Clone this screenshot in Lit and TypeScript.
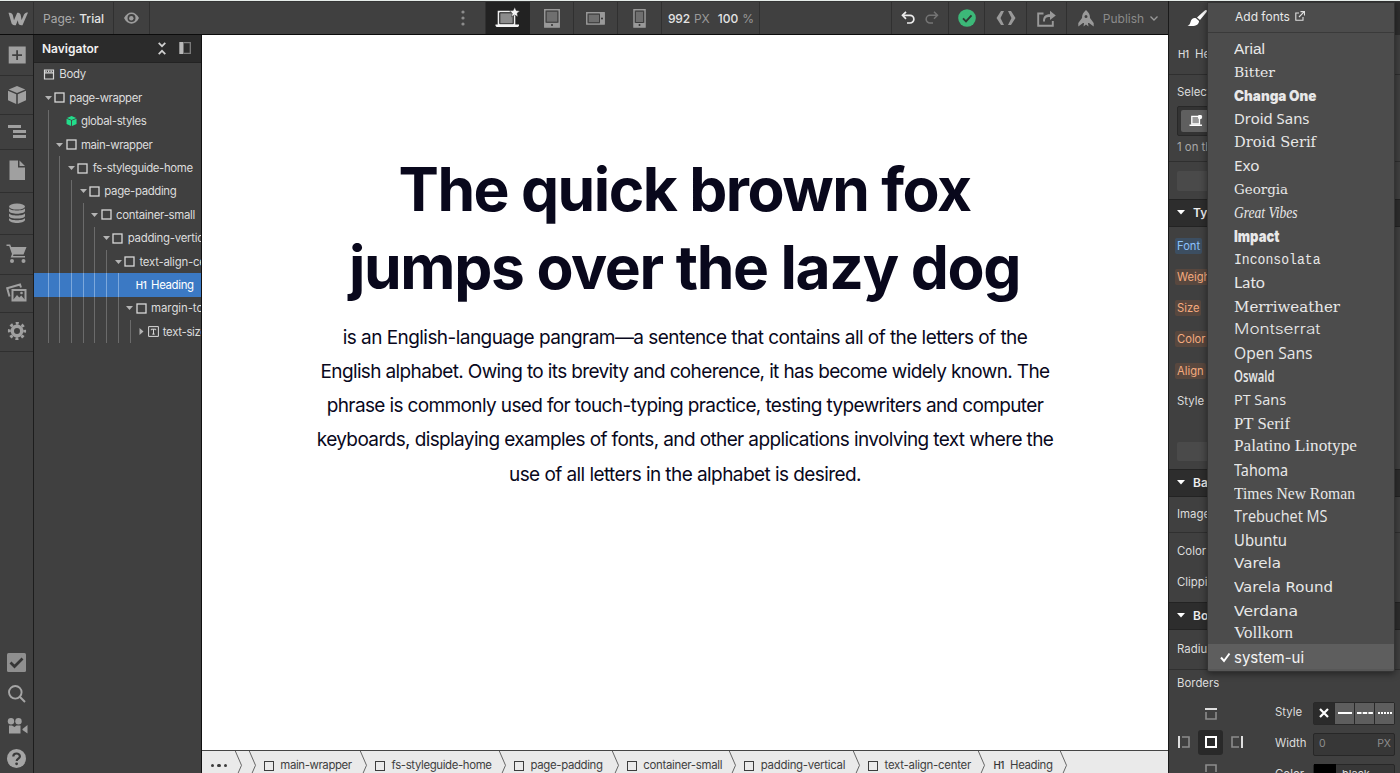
import { LitElement, html, css, svg, nothing } from "lit";
import { customElement, property } from "lit/decorators.js";
import { styleMap } from "lit/directives/style-map.js";

/** A single line of text that is set to an exact width, by tracking or by condensing. */
@customElement("fit-line")
class FitLine extends LitElement {
  @property() text = "";
  @property({ type: Number }) width = 0;
  @property() mode = "track";
  static styles = css`
    :host { display: inline-block; white-space: pre; }
    .run { display: inline-block; transform-origin: 0 50%; white-space: pre; }
  `;
  render() {
    return html`<span class="run">${this.text}</span>`;
  }
  updated() {
    const run = this.renderRoot.querySelector(".run") as HTMLElement;
    run.style.letterSpacing = "0";
    run.style.transform = "none";
    const natural = run.getBoundingClientRect().width;
    if (!this.width || !natural) return;
    this.style.width = this.width + "px";
    if (this.mode === "track") {
      run.style.letterSpacing = (this.width - natural) / this.text.length + "px";
    } else {
      run.style.transform = `scaleX(${this.width / natural})`;
    }
  }
}

const NODES: { d: number; kind: string; name: string; w: number; arrow?: string; sel?: boolean }[] = [
  { d: -1, kind: "body", name: "Body", w: 26.5 },
  { d: 0, kind: "box", name: "page-wrapper", w: 72.5, arrow: "down" },
  { d: 1, kind: "cube", name: "global-styles", w: 65.5 },
  { d: 1, kind: "box", name: "main-wrapper", w: 71.5, arrow: "down" },
  { d: 2, kind: "box", name: "fs-styleguide-home", w: 100, arrow: "down" },
  { d: 3, kind: "box", name: "page-padding", w: 72, arrow: "down" },
  { d: 4, kind: "box", name: "container-small", w: 79, arrow: "down" },
  { d: 5, kind: "box", name: "padding-vertical", w: 84.5, arrow: "down" },
  { d: 6, kind: "box", name: "text-align-center", w: 86.5, arrow: "down" },
  { d: 7, kind: "h1", name: "Heading", w: 42.5, sel: true },
  { d: 7, kind: "box", name: "margin-top", w: 59, arrow: "down" },
  { d: 8, kind: "text", name: "text-size-medium", w: 90, arrow: "right" },
];

type Font = { n: string; w: number; dy?: number; f: string; s?: number; b?: number; i?: boolean };
const SANS = '"Open Sans", sans-serif';
const NOTO = '"Noto Sans", sans-serif';
const SERIF = '"Liberation Serif", serif';
const DSERIF = '"DejaVu Serif", serif';
const FONTS: Font[] = [
  { n: "Arial", w: 31, f: '"Liberation Sans", sans-serif', s: 15.5, dy: -0.6 },
  { n: "Bitter", w: 41, f: DSERIF, s: 13.8, dy: -0.7 },
  { n: "Changa One", w: 82.5, f: "Inter, sans-serif", b: 900, s: 14.5, dy: -0.4 },
  { n: "Droid Sans", w: 75.5, f: NOTO, dy: -1 },
  { n: "Droid Serif", w: 82, f: DSERIF, s: 14.3, dy: -0.8 },
  { n: "Exo", w: 25.5, f: NOTO, s: 15, dy: -0.6 },
  { n: "Georgia", w: 54, f: DSERIF, s: 13.6, dy: -0.5 },
  { n: "Great Vibes", w: 63.5, f: SERIF, i: true, s: 16, dy: -0.4 },
  { n: "Impact", w: 45.5, f: "Inter, sans-serif", b: 900, s: 16.5, dy: 0.2 },
  { n: "Inconsolata", w: 86.5, f: '"Liberation Mono", monospace', s: 14.5, dy: -0.6 },
  { n: "Lato", w: 31, f: "Lato, sans-serif", s: 15.6 },
  { n: "Merriweather", w: 106, f: DSERIF, s: 14.5 },
  { n: "Montserrat", w: 86.5, f: "Inter, sans-serif", b: 300, s: 14.5, dy: -0.8 },
  { n: "Open Sans", w: 78.5, f: SANS, s: 15.5 },
  { n: "Oswald", w: 40.5, f: SANS, b: 600, s: 16.5, dy: 0.3 },
  { n: "PT Sans", w: 52, f: SANS, s: 15.2, dy: -0.2 },
  { n: "PT Serif", w: 56, f: SERIF, s: 16.5, dy: 0.3 },
  { n: "Palatino Linotype", w: 123, f: SERIF, s: 16.3, dy: -1.4 },
  { n: "Tahoma", w: 54, f: NOTO, s: 15.5, dy: 0.2 },
  { n: "Times New Roman", w: 121, f: SERIF, s: 16, dy: -0.4 },
  { n: "Trebuchet MS", w: 93.5, f: SANS, s: 15.5 },
  { n: "Ubuntu", w: 53, f: NOTO, s: 15.5, dy: 0.4 },
  { n: "Varela", w: 47, f: '"DejaVu Sans", sans-serif', s: 14.4, dy: -0.7 },
  { n: "Varela Round", w: 99, f: '"DejaVu Sans", sans-serif', s: 14.4, dy: -0.6 },
  { n: "Verdana", w: 64, f: '"DejaVu Sans", sans-serif', s: 14.6, dy: 0 },
  { n: "Vollkorn", w: 59, f: SERIF, s: 16.2, dy: -1.5 },
];

const CRUMBS = [
  { n: "main-wrapper", w: 111.3, t: 71.5 },
  { n: "fs-styleguide-home", w: 139, t: 100 },
  { n: "page-padding", w: 112.7, t: 72 },
  { n: "container-small", w: 117.5, t: 79 },
  { n: "padding-vertical", w: 123.8, t: 84.5 },
  { n: "text-align-center", w: 125.5, t: 86.5 },
  { n: "Heading", w: 82, t: 42.5, h1: true },
];

const cube = (fill: string) => svg`
  <path d="M9 0 17.3 3.4 9 7 .7 3.4z" fill=${fill} />
  <path d="M0 4.8 8.2 8.3V18L0 14.2zM18 4.8 9.8 8.3V18l8.2-3.8z" fill=${fill} />`;

const ARROW = {
  down: html`<svg class="arrow" width="7" height="6" viewBox="0 0 7 6"><path d="M0 1h7L3.5 5z" fill="#b4b4b4" /></svg>`,
  right: html`<svg class="arrow" width="7" height="7" viewBox="0 0 7 7"><path d="M1.5 0v7L5.5 3.5z" fill="#b4b4b4" /></svg>`,
};

@customElement("app-root")
class AppRoot extends LitElement {
  static styles = css`
    :host {
      display: flex; flex-direction: column; position: relative; box-sizing: border-box;
      width: 1400px; height: 773px; overflow: hidden; padding-top: 1px;
      background: #e6edea; color: #dcdcdc; font: 11.4px/1.2 Inter, sans-serif;
    }
    * { box-sizing: border-box; }
    svg { display: block; flex: none; }
    .shell { display: grid; grid-template-columns: 1168px 232px; height: 772px; background: #404040; }
    .left { display: grid; grid-template-rows: 34px 738px; min-width: 0; }

    .top { display: flex; background: #404040; border-top: 1px solid #353535; border-bottom: 1px solid #0c0c0c; }
    .cell { display: flex; align-items: center; justify-content: center; border-right: 1px solid #303030; }
    .logo { width: 34px; padding-left: 2px; padding-top: 1px; }
    .page { width: 80px; gap: 4px; font-size: 12px; color: #a9a9a9; padding: 2px 0 0 0; }
    .page b, .zoom b { font-weight: 500; color: #e4e4e4; }
    .eye { width: 36px; }
    .dots { flex: none; width: 336px; justify-content: flex-end; padding-right: 20px; }
    .device { width: 44px; }
    .device.on { background: #222; border-color: #222; width: 44px; }
    .zoom { width: 98px; font-size: 12px; color: #999; gap: 4px; padding: 2px 0 0 1px; }
    .zoom i { font-style: normal; margin-right: 4px; }
    .zoom i:last-child { margin: 0; }
    .space { width: 132px; }
    .undo { width: 57px; gap: 10px; }
    .ok { width: 36px; } .code { width: 42px; } .share { width: 40px; }
    .publish { width: 102px; gap: 9px; color: #8b8b8b; font-size: 12px; border: 0; }
    .publish .lbl { display: flex; gap: 6px; align-items: center; padding-top: 2px; }

    .work { display: grid; grid-template-columns: 34px 168px 966px; height: 738px; }
    .rail { display: flex; flex-direction: column; border-right: 1px solid #1d1d1d; background: #404040; }
    .rail .item { display: flex; align-items: center; justify-content: center; border-bottom: 1px solid #2f2f2f; }
    .rail .item:nth-child(n + 4) { padding-bottom: 2px; }
    .rail .fill { flex: 1; }
    .rail .foot { display: flex; align-items: center; justify-content: center; height: 32px; padding-top: 2px; }

    .nav { border-right: 1.5px solid #111; background: #404040; overflow: hidden; }
    .nav-head { display: flex; align-items: center; height: 27.8px; padding: 0 10.5px 0 8px; background: #2b2b2b; border-bottom: 1px solid #232323; }
    .nav-head b { flex: 1; font-weight: 600; font-size: 12px; color: #f0f0f0; padding-top: 2px; }
    .nav-head svg + svg { margin-left: 13px; }
    .node { display: flex; align-items: center; height: 23.4px; white-space: nowrap; overflow: hidden; }
    .node fit-line, .node .h1 { padding-top: 1.6px; }
    .node.sel { background: #3b79c4; color: #fff; }
    .guide { flex: none; width: 11.7px; height: 23.4px; }
    .guide::after { content: ""; display: block; margin-left: 13.7px; width: 1px; height: 100%; background: #6b6b6b; }
    .sel .guide::after { background: #7ca8dc; }
    .twig { flex: none; display: flex; width: 20px; padding-left: 10.5px; }
    .twig.root { width: 8.5px; }
    .glyph { flex: none; width: 15.3px; display: flex; align-items: center; }
    .twig.root + .glyph { width: 14.8px; }
    .h1 { font-size: 9.8px; letter-spacing: -.4px; font-weight: 500; }

    .stage { display: grid; grid-template-rows: 715px 23px; min-width: 0; }
    .canvas { background: #fff; color: #09081c; display: flex; flex-direction: column; align-items: center; padding-top: 114.5px; }
    .title { display: flex; flex-direction: column; align-items: center; margin: 0; font-size: 60.5px; line-height: 78.5px; font-weight: 700; padding-right: 1px; }
    .copy { display: flex; flex-direction: column; align-items: center; margin: 14.5px 0 0; font-size: 19px; line-height: 34.15px; }

    .crumbs { display: flex; background: #eaeaea; border-top: 1.6px solid #454545; color: #3f3f3f; overflow: hidden; }
    .more { display: flex; align-items: center; width: 33px; gap: 3px; padding: 7px 0 0 9px; }
    .more span { width: 3.4px; height: 3.4px; border-radius: 50%; background: #3d3d3d; }
    .mid { width: 13.6px; }
    .crumb { display: flex; align-items: center; padding: 7px 0 0 15px; }
    .crumb fit-line { margin-left: 6.7px; padding-top: 1.4px; }
    .crumb .h1 { width: 10px; color: #333; padding-top: 1px; }
    .sq { flex: none; width: 10px; height: 10px; border: 1px solid #3d3d3d; }
    .chev { margin-right: -8px; }

    .side { position: relative; border-left: 1px solid #1a1a1a; background: #404040; overflow: hidden; }
    .tabs { display: flex; height: 34px; border-top: 1px solid #353535; background: #2e2e2e; }
    .tab { display: flex; align-items: center; justify-content: center; width: 56px; background: #404040; }
    .who { display: flex; align-items: center; gap: 6.500px; height: 40px; padding: 1px 0 0 9px; font-size: 11.5px; border-bottom: 1px solid #2f2f2f; }
    .picker { height: 87px; padding: 11px 0 0 8px; border-bottom: 1px solid #2f2f2f; }
    .field { margin-top: 6px; height: 30px; padding: 3px; background: #333; border: 1px solid #282828; border-radius: 2px; width: 216px; display: flex; }
    .chip { width: 60px; background: #5f5f5f; border-radius: 2px; display: flex; align-items: center; padding-left: 8px; }
    .note { margin-top: 5px; color: #a8a8a8; }
    .bar { height: 19.5px; width: 216px; margin-left: 8px; background: #4a4a4a; border-radius: 2px; }
    .gap9 { height: 9px; } .gap8 { height: 8px; } .gap7 { height: 7.500px; }
    .sec { display: flex; align-items: center; gap: 8px; height: 28px; padding-left: 8px; background: #2d2d2d; border-top: 1px solid #232323; border-bottom: 1px solid #232323; font-weight: 600; font-size: 12px; color: #eee; }
    .sec span { padding-top: 1px; }
    .row { display: flex; align-items: center; height: 31.25px; padding: 1px 0 0 8px; }
    .tag { margin-left: -2px; padding: 1px 2px 0; line-height: 15px; border-radius: 2px; color: #f5ab7e; background: #58473e; font-size: 11.2px; }
    .tag.blue { color: #8cc2fb; background: #3c4e61; }
    .rule { border-bottom: 1px solid #303030; }
    .type { height: 215px; padding-top: 3.1px; }
    .borders { display: grid; grid-template-columns: 106px 120px; }
    .edges { display: grid; grid-template-columns: 22px 26px 22px; grid-template-rows: 31px 25px 31px; column-gap: 2.5px; padding: 1px 0 0 4px; justify-items: center; align-items: center; }
    .mid-edge { display: flex; align-items: center; justify-content: center; width: 25px; height: 25px; background: #292929; border-radius: 3px; }
    .pair { display: grid; grid-template-columns: 38px 82px; align-items: center; height: 31px; }
    .seg { display: grid; grid-template-columns: 20px 1fr 1fr 19px; gap: 1px; height: 23px; background: #292929; border: 1px solid #292929; border-radius: 2px; }
    .seg div { background: #5e5e5e; display: flex; align-items: center; justify-content: center; }
    .seg div:first-child { background: #2b2b2b; }
    .input { display: flex; align-items: center; justify-content: space-between; height: 23px; padding: 0 3px 0 5px; background: #373737; border: 1px solid #272727; border-radius: 2px; color: #8d8d8d; font-size: 10.5px; }
    .input.color { padding: 0; justify-content: flex-start; gap: 6px; color: #dcdcdc; font-size: 11px; }
    .swatch { width: 22px; height: 22px; background: #000; }

    .menu { position: absolute; left: 38px; top: 1px; width: 188px; height: 670px; background: #4c4c4c; border: 1px solid #343434; border-radius: 0 0 3px 3px; box-shadow: 0 2px 7px rgba(0, 0, 0, .45); overflow: hidden; color: #e8e8e8; }
    .add { display: flex; align-items: center; gap: 5px; height: 30px; padding: 0 0 1px 27px; border-bottom: 1px solid #3a3a3a; font-size: 12px; }
    .add svg { margin-bottom: 2px; }
    .opts { padding-top: 4.5px; }
    .opt { display: flex; align-items: baseline; height: 23.4px; padding-left: 26.300px; line-height: 0; }
    .strut { display: inline-block; width: 0; }
    .opt.cur { height: 28px; margin-top: -1.4px; padding-left: 11.500px; background: #5e5e5e; color: #f4f4f4; font-size: 15px; border-bottom: 3px solid #575757; }
    .tick { width: 14.5px; }
  `;

  rail() {
    const c = "#a0a0a0";
    const icons: [number, unknown][] = [
      [41, svg`<path fill=${c} fill-rule="evenodd" d="M.7.5h17v17H.7zM8.2 4.2v4h-4v1.8h4v4H10v-4h4V8.2h-4v-4z"/>`],
      [39, cube(c)],
      [35, svg`<path fill=${c} d="M0 2h13v3H0zM5 7h13v3H5zM5 12h13v3H5z"/>`],
      [43, svg`<path fill=${c} d="M1.500-.5h8.500v7h7v12.500H1.500zM11.500-.5l5.500 5.500h-5.500z"/>`],
      [42, svg`<g fill=${c}><ellipse cx="9" cy="2.600" rx="8" ry="3"/><path d="M1 4.300c1 3 15 3 16 0v2.700c-1 3.600-15 3.600-16 0zM1 9.200c1 3 15 3 16 0v2.700c-1 3.600-15 3.600-16 0zM1 14c1 3 15 3 16 0v2c-1 4-15 4-16 0z"/></g>`],
      [40, svg`<g fill=${c}><path d="M-1.500-.5h3.700l1 2.500h15.300l-3 7.500H5.500l-.5 1.600h12v1.400H2.700l1.300-3.500L1.200 1h-2.700z"/><circle cx="4" cy="16" r="2"/><circle cx="15.500" cy="16" r="2"/></g>`],
      [38, svg`<g fill="none" stroke=${c}><path d="M1.500 12.500-.8 4.200 12 .5l1 3" stroke-width="2"/><path d="M4.500 6h13v10.500h-13z" stroke-width="2"/></g><path fill=${c} d="M5 16l4-5 2.300 2.500 2-2L17 16z"/><circle cx="13.500" cy="9" r="1.300" fill=${c}/>`],
      [39, svg`<g fill="none" stroke=${c}><circle cx="9" cy="9" r="4.700" stroke-width="3.400"/><circle cx="9" cy="9" r="7.700" stroke-width="2.800" stroke-dasharray="3 3.047" stroke-dashoffset="1.500"/></g>`],
    ];
    return html`<div class="rail">
      ${icons.map(([h, p]) => html`<div class="item" style=${styleMap({ height: h + "px" })}><svg width="18" height="18" viewBox="0 0 18 18" overflow="visible">${p}</svg></div>`)}
      <div class="fill"></div>
      <div class="foot"><svg width="19" height="19" viewBox="0 0 19 19"><rect width="19" height="19" rx="1.500" fill="#8f8f8f"/><path d="m3.500 9.500 4 4 8-8" fill="none" stroke="#363636" stroke-width="2.700"/></svg></div>
      <div class="foot"><svg width="18" height="18" viewBox="0 0 18 18" fill="none" stroke="#a5a5a5" stroke-width="1.900"><circle cx="7.300" cy="7.300" r="6.300"/><path d="m12 12 5 5"/></svg></div>
      <div class="foot"><svg width="19" height="16" viewBox="-1.500 0 19 16" overflow="visible" fill="#a0a0a0"><circle cx="2.500" cy="3.300" r="3.200"/><circle cx="10" cy="3.300" r="3.200"/><path d="M.5 7.500h3L6 9l2-1.500h4V15.500H.5zM14 11l5-4v8.500l-5-3.500z"/></svg></div>
      <div class="foot"><svg width="19" height="19" viewBox="0 0 19 19"><circle cx="9.500" cy="9.500" r="9.500" fill="#a5a5a5"/><path d="M6.300 7.500c0-4 6.600-4 6.600 0 0 2.200-3.200 2.200-3.200 4.500" fill="none" stroke="#3a3a3a" stroke-width="2.200"/><circle cx="9.600" cy="14.800" r="1.400" fill="#3a3a3a"/></svg></div>
    </div>`;
  }

  glyph(kind: string) {
    if (kind === "box") return html`<svg width="11" height="11" viewBox="0 0 11 11"><rect x="1" y="1" width="9" height="9" fill="none" stroke="#d8d8d8" stroke-width="1.300"/></svg>`;
    if (kind === "cube") return html`<svg width="10" height="10" viewBox="-1 0 18 18" overflow="visible">${cube("#22dd8b")}</svg>`;
    if (kind === "body") return html`<svg width="11" height="11" viewBox="1.500 0 11 11" overflow="visible"><path d="M1 1h9v9H1zM1 3.800h9" fill="none" stroke="#d8d8d8" stroke-width="1.200"/><path d="M2 2.200h7.500" stroke="#d8d8d8" stroke-dasharray="1.300 1.200" stroke-width="1.500"/></svg>`;
    if (kind === "h1") return html`<span class="h1">H1</span>`;
    return html`<svg width="11" height="11" viewBox="0 0 11 11" fill="none" stroke="#d8d8d8"><path d="M.6 .6h9.800v9.800H.6z"/><path d="M3.300 4.200V3.200h4.400v1M5.500 3.200v5M4.300 8.100h2.400"/></svg>`;
  }

  edge(side: string) {
    const d: Record<string, string> = { t: "M0 1h12", l: "M1 0v12", r: "M11 0v12", b: "M0 11h12" };
    const box: Record<string, string> = { t: "M1 4v7h10V4", l: "M4 1h7v10H4", r: "M8 1H1v10h7", b: "M1 8V1h10v7" };
    if (side === "a") return html`<svg width="12" height="12" viewBox="0 0 12 12"><path d="M1 1h10v10H1z" fill="none" stroke="#fff" stroke-width="2"/></svg>`;
    return html`<svg width="12" height="12" viewBox="0 0 12 12" fill="none"><path d=${box[side]} stroke="#8c8c8c" stroke-width="1.600"/><path d=${d[side]} stroke="#f2f2f2" stroke-width="1.800"/></svg>`;
  }

  sec(name: string) {
    return html`<div class="sec"><svg width="8" height="5" viewBox="0 0 8 5"><path d="M0 0h8L4 4.500z" fill="#fff"/></svg><span>${name}</span></div>`;
  }

  top() {
    return html`<div class="top">
      <div class="cell logo"><svg width="20" height="14" viewBox="0 0 20 14"><path fill="#a6a6a6" d="M20 .4 14.500 13.300c-1.500 0-3.600-.2-4-1.500L9.800 8.300 7.800 13.300c-1.600 0-3.700-.3-4.200-1.700L.5.700C2.800.7 4.400 1.100 4.800 3L6 8.200 9.200.7c1.900 0 3.200.6 3.500 2.200l.9 5L16 2.500C16.700 1 18 .4 20 .4z"/></svg></div>
      <div class="cell page"><span>Page:</span><b>Trial</b></div>
      <div class="cell eye"><svg width="15" height="12" viewBox="0 0 15 12"><path d="M0 6C3.500-1.500 11.500-1.500 15 6c-3.500 7.500-11.500 7.500-15 0z" fill="#9c9c9c"/><circle cx="7.500" cy="6" r="4" fill="#404040"/><circle cx="7.300" cy="6.200" r="2.200" fill="#9c9c9c"/></svg></div>
      <div class="cell dots"><svg width="4" height="16" viewBox="0 0 4 16" fill="#8c8c8c"><circle cx="2" cy="2" r="1.600"/><circle cx="2" cy="8" r="1.600"/><circle cx="2" cy="14" r="1.600"/></svg></div>
      <div class="cell device on"><svg width="25" height="22" viewBox="0 0 25 22"><path d="M3.500 4.500h16v13h-16z" fill="#8c8c8c" stroke="#f0f0f0" stroke-width="1.600"/><path d="M4.800 5.800h13.400v11H4.800z" fill="none" stroke="#222"/><path d="M.5 17.500h23.500v1.200l-1 1.300H1.500l-1-1.300z" fill="#f4f4f4"/><path d="m19.700.2 1.500 3.300 3.600.4-2.700 2.400.8 3.500-3.200-1.800-3.200 1.800.8-3.500-2.700-2.400 3.600-.4z" fill="#f4f4f4" stroke="#222" stroke-width=".5"/></svg></div>
      <div class="cell device"><svg width="16" height="19" viewBox="0 0 16 19"><path d="M.7.700h14.600v17.500H.7z" fill="#6f6f6f" stroke="#999" stroke-width="1.300"/><path d="M1 14h14v4H1z" fill="#999"/><path d="M2.200 2.200h11.600v11H2.200z" fill="none" stroke="#3c3c3c"/><circle cx="8" cy="16" r="1" fill="#333"/></svg></div>
      <div class="cell device"><svg width="19" height="13" viewBox="0 0 19 13"><path d="M.7.700h17.500v11.500H.7z" fill="#6f6f6f" stroke="#999" stroke-width="1.300"/><path d="M14 1h4.500v11H14z" fill="#999"/><path d="M2.200 2.200h11.300v8.500H2.200z" fill="none" stroke="#3c3c3c"/><circle cx="16" cy="6.500" r="1" fill="#333"/></svg></div>
      <div class="cell device"><svg width="13" height="19" viewBox="0 0 13 19"><path d="M.9.700h11.200v17.500H.9z" fill="#6f6f6f" stroke="#999" stroke-width="1.300"/><path d="M1 14h11v4H1z" fill="#999"/><path d="M2.400 2.200h8.200v11.300H2.400z" fill="none" stroke="#3c3c3c"/><circle cx="6.500" cy="16" r="1" fill="#333"/></svg></div>
      <div class="cell zoom"><b><fit-line .text=${"992"} .width=${22}></fit-line></b><i>PX</i><b>100</b><i>%</i></div>
      <div class="cell space"></div>
      <div class="cell undo">
        <svg width="14" height="14" viewBox="0 0 14 14" fill="none"><path d="M2.500 4.300H9a3.700 3.700 0 0 1 0 7.700H6" stroke="#ececec" stroke-width="1.700"/><path d="M5 .800 1.500 4.300 5 7.800" stroke="#ececec" stroke-width="1.700"/></svg>
        <svg width="14" height="14" viewBox="0 0 14 14" fill="none" stroke="#747474" stroke-width="1.500"><path d="M11.500 4.300H5a3.700 3.700 0 0 0 0 7.700h3M9 .800l3.500 3.500L9 7.800"/></svg>
      </div>
      <div class="cell ok"><svg width="18" height="18" viewBox="0 0 18 18"><circle cx="9" cy="9" r="8.800" fill="#3cb878"/><path d="m5 9.300 3 3 5.500-6" fill="none" stroke="#2d3b34" stroke-width="1.900"/></svg></div>
      <div class="cell code"><svg width="20" height="14" viewBox="0 0 20 14" fill="#999"><path d="M5 0h3L4.500 7 8 14H5L.5 7zM15 0h-3l3.500 7-3.500 7h3l4.500-7z"/></svg></div>
      <div class="cell share"><svg width="19" height="17" viewBox="0 0 19 17"><path d="M6.500 3.500H1.200v12.300h14.600V11" fill="none" stroke="#999" stroke-width="1.900"/><path d="M6 11.500c0-5 2-7.300 7-7.300V.700l5.800 4.800L13 10V7c-4 0-5 1-5 4.500z" fill="#999"/></svg></div>
      <div class="cell publish"><svg width="16" height="17" viewBox="0 0 16 17" fill="#999"><path fill-rule="evenodd" d="M8 0C5 2.500 4 5 4 8L.3 13v3.500L5 13h1l-.5 3.500L8 14.500l2.500 2L10 13h1l4.700 3.500V13L12 8c0-3-1-5.500-4-8zm0 5a1.500 1.500 0 1 1 0 3 1.500 1.500 0 0 1 0-3z"/></svg>
        <span class="lbl">Publish<svg width="8" height="5" viewBox="0 0 8 5" fill="none" stroke="#999" stroke-width="1.300"><path d="m.5.500 3.500 3.500L7.500.5"/></svg></span></div>
    </div>`;
  }

  navigator() {
    return html`<div class="nav">
      <div class="nav-head"><b>Navigator</b>
        <svg width="8" height="13" viewBox="0 0 8 13" fill="none" stroke="#d0d0d0" stroke-width="1.700"><path d="m.7.800 3.300 3.400L7.300.8M.7 12.200 4 8.800l3.300 3.400"/></svg>
        <svg width="12" height="12" viewBox="0 0 12 12"><path d="M5 .7h6.300v10.600H5" fill="none" stroke="#7d7d7d" stroke-width="1.300"/><path d="M.3 0h4.200v12H.3z" fill="#b8b8b8"/></svg>
      </div>
      ${NODES.map((n) => html`<div class="node ${n.sel ? "sel" : ""}">
        ${n.d > 0 ? Array.from({ length: n.d }, () => html`<span class="guide"></span>`) : nothing}
        <span class="twig ${n.d < 0 ? "root" : ""}">${n.arrow ? ARROW[n.arrow as "down" | "right"] : nothing}</span>
        <span class="glyph">${this.glyph(n.kind)}</span>
        <fit-line .text=${n.name} .width=${n.w}></fit-line>
      </div>`)}
    </div>`;
  }

  chev() {
    return html`<svg class="chev" width="8" height="29" viewBox="0 0 8 29"><path d="M.3 0 6.500 14.300.3 28.500" fill="none" stroke="#666"/></svg>`;
  }

  stage() {
    const title: [string, number][] = [["The quick brown fox", 572], ["jumps over the lazy dog", 671]];
    const copy: [string, number][] = [
      ["is an English-language pangram—a sentence that contains all of the letters of the", 684.5],
      ["English alphabet. Owing to its brevity and coherence, it has become widely known. The", 729],
      ["phrase is commonly used for touch-typing practice, testing typewriters and computer", 716.5],
      ["keyboards, displaying examples of fonts, and other applications involving text where the", 736.5],
      ["use of all letters in the alphabet is desired.", 352],
    ];
    return html`<div class="stage">
      <div class="canvas">
        <h1 class="title">${title.map(([t, w]) => html`<fit-line .text=${t} .width=${w}></fit-line>`)}</h1>
        <p class="copy">${copy.map(([t, w]) => html`<fit-line .text=${t} .width=${w}></fit-line>`)}</p>
      </div>
      <div class="crumbs">
        <div class="more"><span></span><span></span><span></span></div>
        ${this.chev()}<div class="mid"></div>
        ${CRUMBS.map((c) => html`${this.chev()}<div class="crumb" style=${styleMap({ width: c.w + "px" })}>
          ${c.h1 ? html`<span class="h1">H1</span>` : html`<span class="sq"></span>`}
          <fit-line .text=${c.n} .width=${c.t}></fit-line></div>`)}
        ${this.chev()}
      </div>
    </div>`;
  }

  menu() {
    return html`<div class="menu">
      <div class="add">Add fonts<svg width="10" height="10" viewBox="0 0 10 10" fill="none" stroke="#dedede" stroke-width="1.100"><path d="M4 2H.8v7.300H8V6M5.500.6h4v4M9.300.7 4 6"/></svg></div>
      <div class="opts">
        ${FONTS.map((f) => html`<div class="opt" style=${styleMap({ fontFamily: f.f, fontSize: (f.s ?? 15) + "px", fontWeight: String(f.b ?? 400), fontStyle: f.i ? "italic" : "normal" })}>
          <span class="strut" style=${styleMap({ height: 17 + (f.dy ?? 0) + "px" })}></span><fit-line .text=${f.n} .width=${f.w} mode="scale"></fit-line></div>`)}
        <div class="opt cur"><span class="strut" style=${styleMap({ height: "18.5px" })}></span>
          <svg class="tick" width="14.5" height="10" viewBox="0 0 14.500 10" overflow="visible"><path d="m1 4.500 3 3.500L9.500.5" fill="none" stroke="#fff" stroke-width="2"/></svg>
          <fit-line .text=${"system-ui"} .width=${70}></fit-line></div>
      </div>
    </div>`;
  }

  side() {
    const tags = ["Weight", "Size", "Color", "Align"];
    return html`<div class="side">
      <div class="tabs"><div class="tab"><svg width="20" height="17" viewBox="0 0 20 17" fill="#fff"><path d="M19.500.3c.8.600.3 1.500-.3 2.200L13 10l-3-2.500L17.500.8c.7-.6 1.400-.9 2-.5zM9 8.300l3 2.600c.3 3.500-4 6.500-11.500 4.600 2-.5 2.300-1.500 3-3.600C4.300 9 6.500 7.500 9 8.300z"/></svg></div></div>
      <div class="who"><span class="h1">H1</span>Heading</div>
      <div class="picker">Selector
        <div class="field"><div class="chip"><svg width="14" height="12" viewBox="0 0 14 12"><path d="M2.800 1.300h7.700V9H2.800z" fill="#999" stroke="#fff" stroke-width="1.300"/><path d="M.5 9.500h12.500V11H.5z" fill="#fff"/><circle cx="11" cy="2" r="2.200" fill="#fff"/></svg></div></div>
        <div class="note">1 on this page</div></div>
      <div class="gap9"></div><div class="bar"></div><div class="gap8"></div>
      ${this.sec("Typography")}
      <div class="type">
        <div class="row"><span class="tag blue">Font</span></div>
        ${tags.map((t) => html`<div class="row"><span class="tag">${t}</span></div>`)}
        <div class="row">Style</div>
      </div>
      <div class="bar"></div><div class="gap7"></div>
      ${this.sec("Backgrounds")}
      <div class="row rule" style=${styleMap({ height: "36px" })}>Image</div>
      <div class="row" style=${styleMap({ height: "38px" })}>Color</div>
      <div class="row" style=${styleMap({ height: "23.5px" })}>Clipping</div>
      <div class="gap7"></div>
      ${this.sec("Borders")}
      <div class="row rule" style=${styleMap({ height: "40px" })}>Radius</div>
      <div class="row" style=${styleMap({ height: "28px" })}>Borders</div>
      <div class="borders">
        <div class="edges">
          <span></span>${this.edge("t")}<span></span>
          ${this.edge("l")}<div class="mid-edge">${this.edge("a")}</div>${this.edge("r")}
          <span></span>${this.edge("b")}<span></span>
        </div>
        <div>
          <div class="pair"><span>Style</span><div class="seg">
            <div><svg width="10" height="10" viewBox="0 0 10 10"><path d="m1 1 8 8M9 1 1 9" stroke="#fff" stroke-width="2.200"/></svg></div>
            <div><svg width="14" height="2" viewBox="0 0 14 2"><path d="M0 1h14" stroke="#fff" stroke-width="2"/></svg></div>
            <div><svg width="16" height="2" viewBox="0 0 16 2"><path d="M0 1h16" stroke="#fff" stroke-width="2" stroke-dasharray="4.500 1.200"/></svg></div>
            <div><svg width="14" height="2" viewBox="0 0 14 2"><path d="M0 1h14" stroke="#fff" stroke-width="2" stroke-dasharray="2 1"/></svg></div>
          </div></div>
          <div class="pair"><span>Width</span><div class="input"><span>0</span><span>PX</span></div></div>
          <div class="pair"><span>Color</span><div class="input color"><span class="swatch"></span>black</div></div>
        </div>
      </div>
      ${this.menu()}
    </div>`;
  }

  render() {
    return html`<div class="shell">
      <div class="left">${this.top()}
        <div class="work">${this.rail()}${this.navigator()}${this.stage()}</div>
      </div>
      ${this.side()}
    </div>`;
  }
}
